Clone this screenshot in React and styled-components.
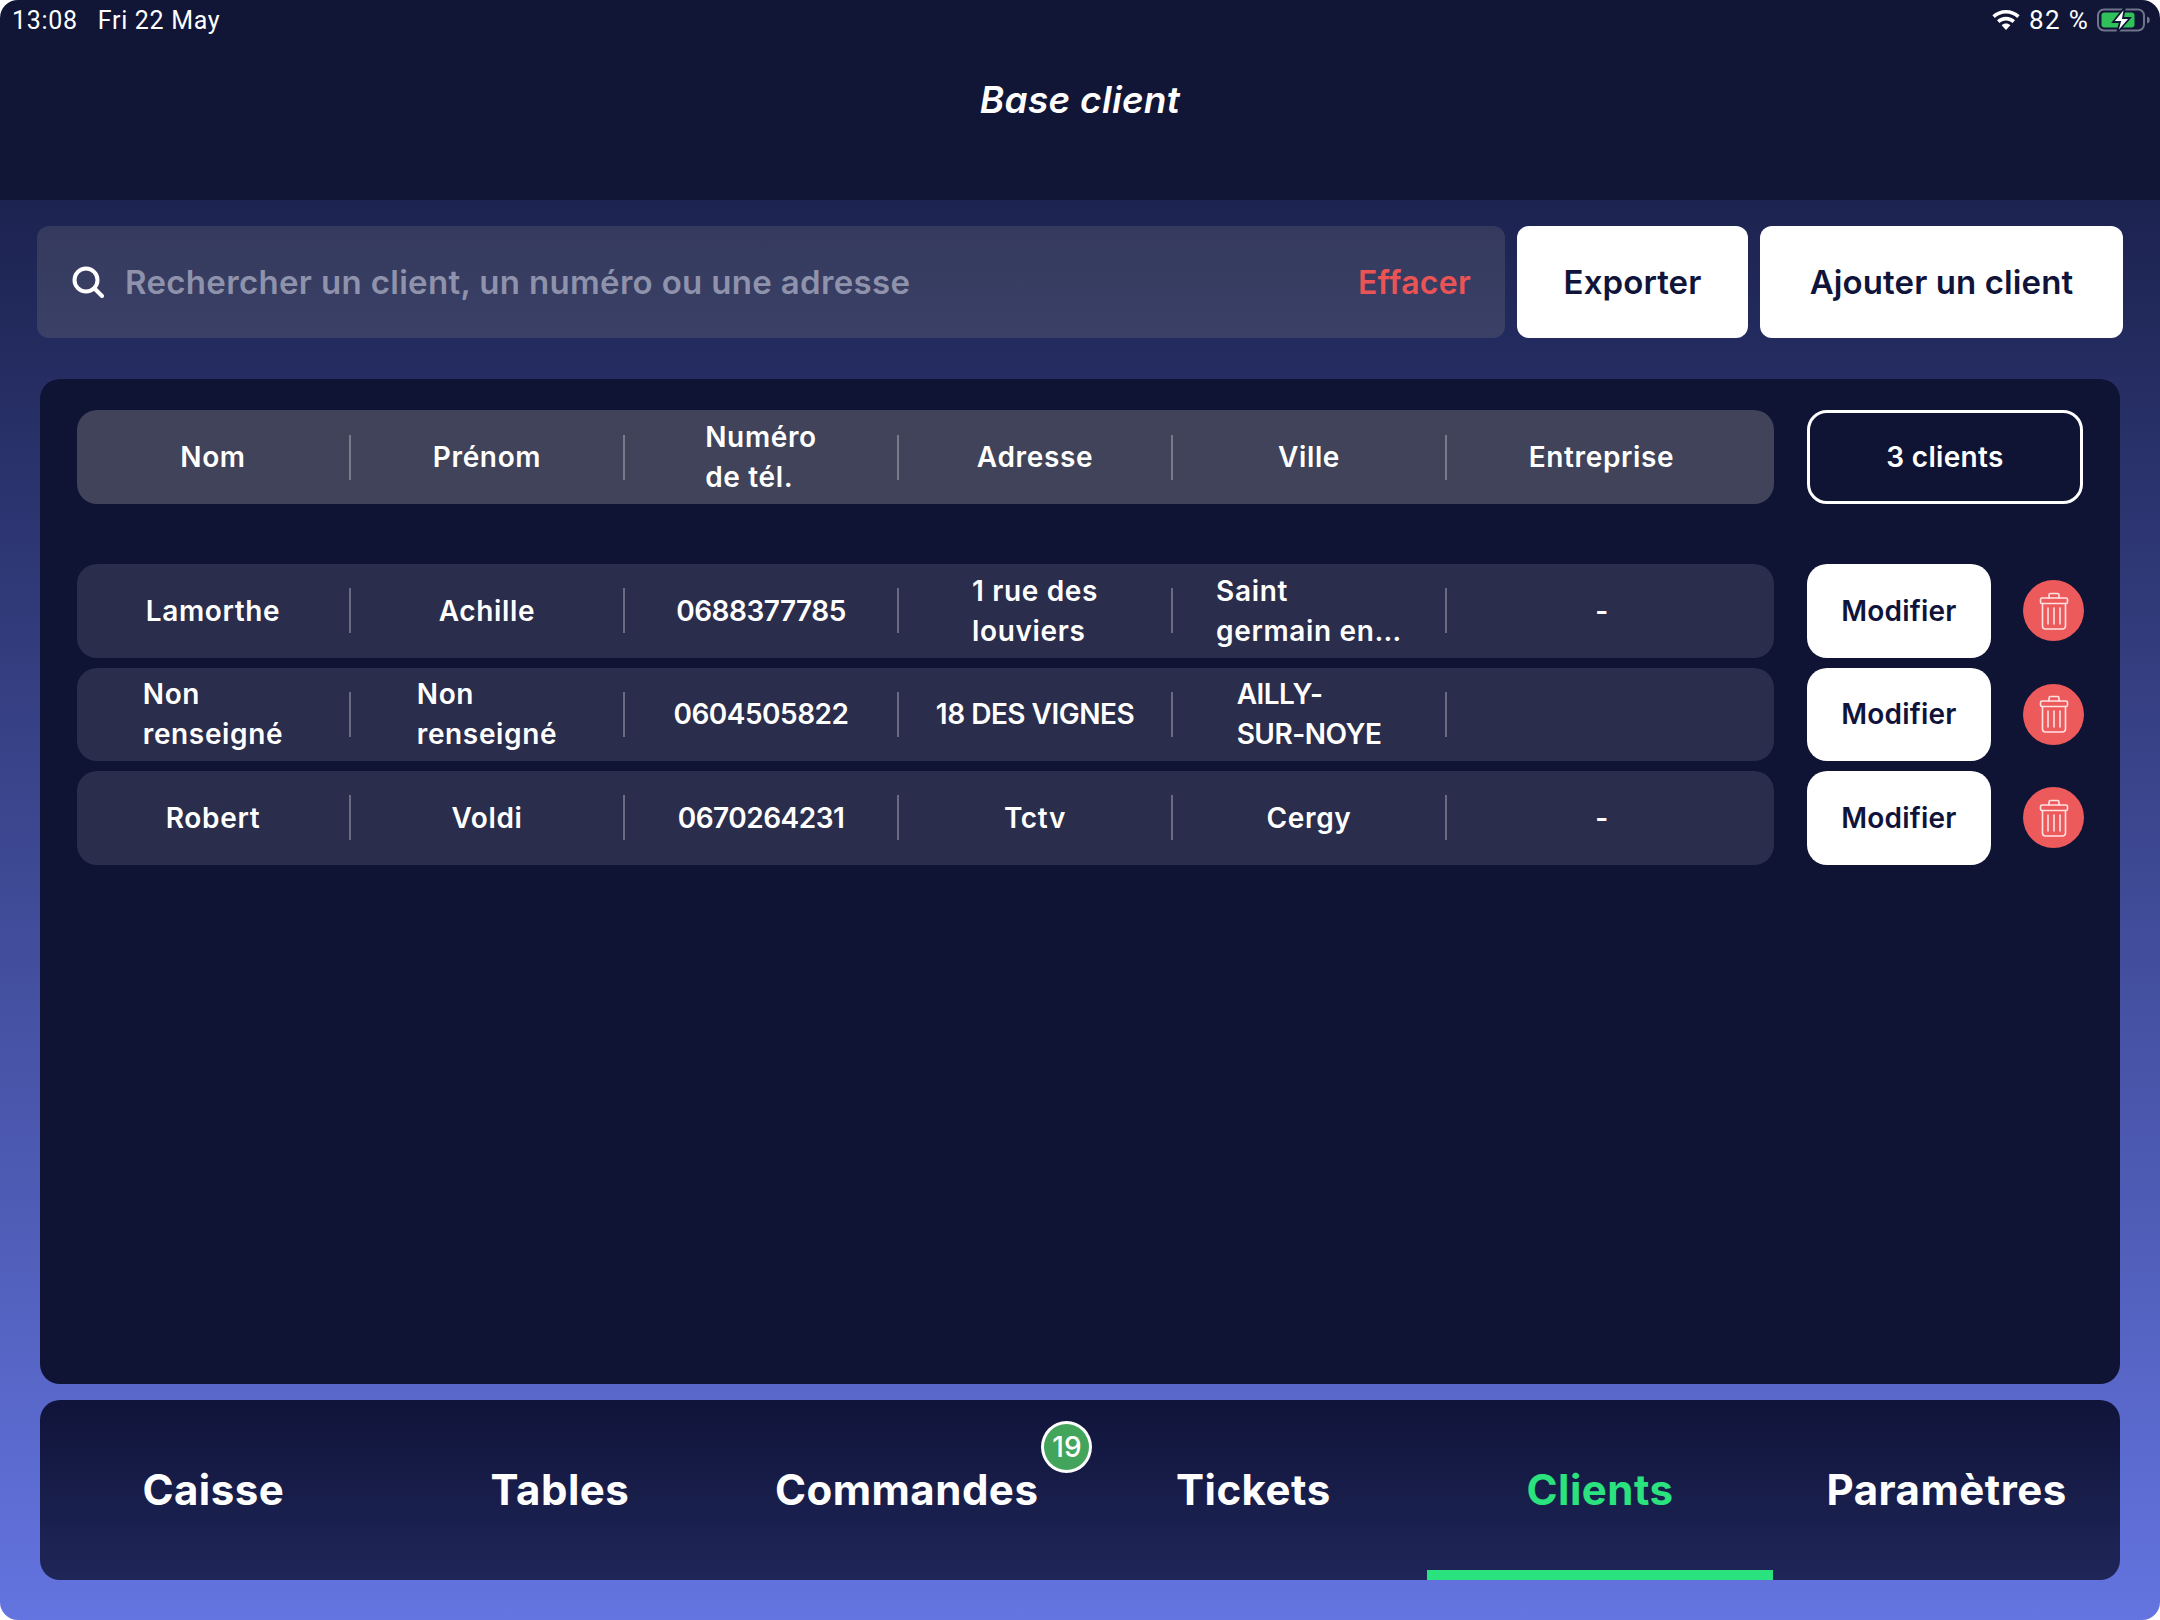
import React from 'react';
import styled, { createGlobalStyle } from 'styled-components';

const Global = createGlobalStyle`
  html, body { margin: 0; padding: 0; background: #fff; }
  * { box-sizing: border-box; }
  body { font-family: Inter, "Liberation Sans", sans-serif; }
`;

const Page = styled.div`
  width: 2160px; height: 1620px; display: flex; flex-direction: column;
  border-radius: 18px; overflow: hidden; color: #fff;
`;
const Header = styled.header`
  height: 200px; flex: none; background: #111536;
`;
const StatusBar = styled.div`
  height: 40px; padding: 0 10px 0 12px; display: flex; align-items: center; justify-content: space-between;
  font-family: Roboto, Inter, sans-serif; font-size: 25px; letter-spacing: 0.7px;
`;
const StatusGroup = styled.div`
  display: flex; align-items: center; gap: ${p => p.$gap || 9}px;
`;
const Percent = styled.span`
  font-size: 26px; letter-spacing: 1.3px; margin-right: -2px;
`;
const Title = styled.h1`
  margin: 40px 0 0; text-align: center; font-size: 37px; line-height: 40px; font-style: italic; font-weight: 600;
  letter-spacing: 0.3px;
`;
const Main = styled.main`
  flex: 1; display: flex; flex-direction: column; padding: 26px 40px 40px;
  background: linear-gradient(180deg, #1c2350 0%, #6474e0 100%);
`;
const Toolbar = styled.div`
  height: 112px; flex: none; display: flex; gap: 12px; margin: 0 -3px 0 -3px;
`;
const Search = styled.div`
  flex: 1; display: flex; align-items: center; padding: 0 34px 0 35px; gap: 21px;
  background: linear-gradient(180deg, #34395d 0%, #3b4067 100%); border-radius: 12px;
`;
const Placeholder = styled.span`
  flex: 1; font-size: 33px; font-weight: 600; color: #8f92ab; letter-spacing: 0.33px;
`;
const Clear = styled.span`
  font-size: 32px; font-weight: 600; color: #ea5455; letter-spacing: 0.3px;
`;
const TopButton = styled.div`
  width: ${p => p.$w}px; flex: none; display: flex; align-items: center; justify-content: center;
  background: #fff; color: #10143a; border-radius: 12px; font-size: 33px; font-weight: 600;
  letter-spacing: 0.1px;
`;
const Panel = styled.section`
  margin-top: 41px; height: 1005px; flex: none; background: #0f1334; border-radius: 20px;
  padding: 31px 36px 0 37px; display: flex; flex-direction: column;
`;
const Line = styled.div`
  display: flex; gap: 33px; margin-top: ${p => p.$mt || 0}px; height: ${p => p.$h}px; flex: none;
`;
const TableRow = styled.div`
  width: 1697px; flex: none; display: flex; align-items: center; border-radius: 20px;
  background: ${p => p.$head ? '#404359' : '#2a2d4b'};
`;
const Cell = styled.div`
  width: ${p => p.$last ? 'auto' : '272px'}; flex: ${p => p.$last ? 1 : 'none'};
  padding-right: ${p => p.$last ? '18px' : 0};
  display: flex; justify-content: center; font-size: 28px; line-height: 40px; font-weight: 600;
  letter-spacing: ${p => p.$tight ? '-0.5px' : '0.65px'};
`;
const CellText = styled.div`
  text-align: left; white-space: nowrap;
`;
const Sep = styled.span`
  width: 2px; height: 45px; flex: none; background: rgba(255,255,255,0.3);
`;
const CountBox = styled.div`
  width: 276px; display: flex; align-items: center; justify-content: center;
  border: 3px solid #fff; border-radius: 20px; font-size: 28px; font-weight: 600; letter-spacing: 0.3px;
`;
const Actions = styled.div`
  display: flex; align-items: center; gap: 32px;
`;
const Modify = styled.div`
  width: 184px; height: 100%; display: flex; align-items: center; justify-content: center;
  background: #fff; color: #10143a; border-radius: 20px; font-size: 28px; font-weight: 600; letter-spacing: 0.2px;
`;
const Trash = styled.div`
  width: 61px; height: 61px; flex: none; border-radius: 50%; background: #ec5a5c;
  display: flex; align-items: center; justify-content: center;
`;
const Nav = styled.nav`
  margin-top: 16px; height: 180px; flex: none; display: grid; grid-template-columns: repeat(6, 1fr);
  border-radius: 20px; overflow: hidden; background: linear-gradient(180deg, #10143a 0%, #1f2658 100%);
`;
const Tab = styled.div`
  position: relative; display: flex; align-items: center; justify-content: center;
  font-size: 42px; font-weight: 700; letter-spacing: 0.5px; color: ${p => p.$active ? '#2ae27e' : '#fff'};
  border-bottom: 10px solid ${p => p.$active ? '#2ae27e' : 'transparent'};
  padding-top: 8px;
`;
const TabLabel = styled.span`
  position: relative;
`;
const Badge = styled.span`
  position: absolute; right: -54px; top: -43px; width: 51px; height: 52px; border-radius: 50%;
  background: #43a55b; border: 3px solid #fff; display: flex; align-items: center; justify-content: center;
  font-size: 28px; font-weight: 500; letter-spacing: 0; color: #fff;
`;

const SearchIcon = () => (
  <svg width="32" height="32" viewBox="0 0 32 32" fill="none" stroke="#fff" strokeWidth="4" strokeLinecap="round">
    <circle cx="14" cy="14" r="11.5" />
    <path d="M22.5 22.5L30 30" />
  </svg>
);
const TrashIcon = () => (
  <svg width="30" height="38" viewBox="0 0 30 38" fill="none" stroke="#ffe3e3" strokeWidth="1.6" strokeLinejoin="round" strokeLinecap="round">
    <path d="M10 6V3a1.5 1.5 0 0 1 1.5-1.5h7A1.5 1.5 0 0 1 20 3v3" />
    <rect x="1.5" y="6" width="27" height="5.5" rx="1.5" />
    <path d="M3.5 11.5V34a3 3 0 0 0 3 3h17a3 3 0 0 0 3-3V11.5" />
    <path d="M9 16v16M15 16v16M21 16v16" />
  </svg>
);
const WifiIcon = () => (
  <svg width="28" height="20" viewBox="0 0 28 20" fill="#fff">
    <path d="M14 0C8.7 0 4 2 .4 5.300l2.400 2.600C5.800 5.200 9.700 3.600 14 3.600s8.200 1.600 11.200 4.300l2.400-2.600C24 2 19.300 0 14 0z" />
    <path d="M14 6.800c-3.400 0-6.600 1.300-9 3.500l2.500 2.600c1.700-1.600 4-2.500 6.500-2.500s4.800.9 6.500 2.500l2.500-2.600c-2.400-2.200-5.600-3.500-9-3.500z" />
    <path d="M14 13.500c-1.700 0-3.200.6-4.400 1.700L14 20l4.400-4.800c-1.200-1.100-2.700-1.700-4.400-1.700z" />
  </svg>
);
const BatteryIcon = () => (
  <svg width="54" height="30" viewBox="0 0 54 30" fill="none">
    <rect x="2" y="4.500" width="46" height="21" rx="6" stroke="#70748a" strokeWidth="2" />
    <rect x="5.500" y="7.500" width="33" height="15" rx="3" fill="#2fc15a" />
    <path d="M51 11.500c1.800.6 2.800 1.800 2.800 3.500s-1 2.900-2.800 3.500z" fill="#70748a" />
    <path d="M29 2L17 17h7l-3 11 13-15h-7z" fill="#fff" stroke="#111536" strokeWidth="1.800" />
  </svg>
);

const heads = ['Nom', 'Prénom', ['Numéro', 'de tél.'], 'Adresse', 'Ville', 'Entreprise'];
const rows = [
  ['Lamorthe', 'Achille', '0688377785', ['1 rue des', 'louviers'], ['Saint', 'germain en…'], '-'],
  [['Non', 'renseigné'], ['Non', 'renseigné'], '0604505822', '18 DES VIGNES', ['AILLY-', 'SUR-NOYE'], ''],
  ['Robert', 'Voldi', '0670264231', 'Tctv', 'Cergy', '-'],
];
const tabs = ['Caisse', 'Tables', 'Commandes', 'Tickets', 'Clients', 'Paramètres'];

const isUpper = v => [].concat(v).join('') === [].concat(v).join('').toUpperCase();

const Cells = ({ values }) => values.map((v, i) => (
  <React.Fragment key={i}>
    <Cell $last={i === 5} $tight={isUpper(v)}>
      <CellText>
        {Array.isArray(v) ? <>{v[0]}<br />{v[1]}</> : v}
      </CellText>
    </Cell>
    {i < 5 && <Sep />}
  </React.Fragment>
));

export default function App() {
  return (
    <Page>
      <Global />
      <Header>
        <StatusBar>
          <StatusGroup $gap={20}><span>13:08</span><span>Fri 22 May</span></StatusGroup>
          <StatusGroup>
            <WifiIcon />
            <Percent>82 %</Percent>
            <BatteryIcon />
          </StatusGroup>
        </StatusBar>
        <Title>Base client</Title>
      </Header>
      <Main>
        <Toolbar>
          <Search>
            <SearchIcon />
            <Placeholder>Rechercher un client, un numéro ou une adresse</Placeholder>
            <Clear>Effacer</Clear>
          </Search>
          <TopButton $w={231}>Exporter</TopButton>
          <TopButton $w={363}>Ajouter un client</TopButton>
        </Toolbar>
        <Panel>
          <Line $h={94}>
            <TableRow $head><Cells values={heads} /></TableRow>
            <CountBox>3 clients</CountBox>
          </Line>
          {rows.map((r, i) => (
            <Line key={i} $h={93.5} $mt={i === 0 ? 60 : 10}>
              <TableRow><Cells values={r} /></TableRow>
              <Actions>
                <Modify>Modifier</Modify>
                <Trash><TrashIcon /></Trash>
              </Actions>
            </Line>
          ))}
        </Panel>
        <Nav>
          {tabs.map(t => (
            <Tab key={t} $active={t === 'Clients'}>
              <TabLabel>
                {t}
                {t === 'Commandes' && <Badge>19</Badge>}
              </TabLabel>
            </Tab>
          ))}
        </Nav>
      </Main>
    </Page>
  );
}
